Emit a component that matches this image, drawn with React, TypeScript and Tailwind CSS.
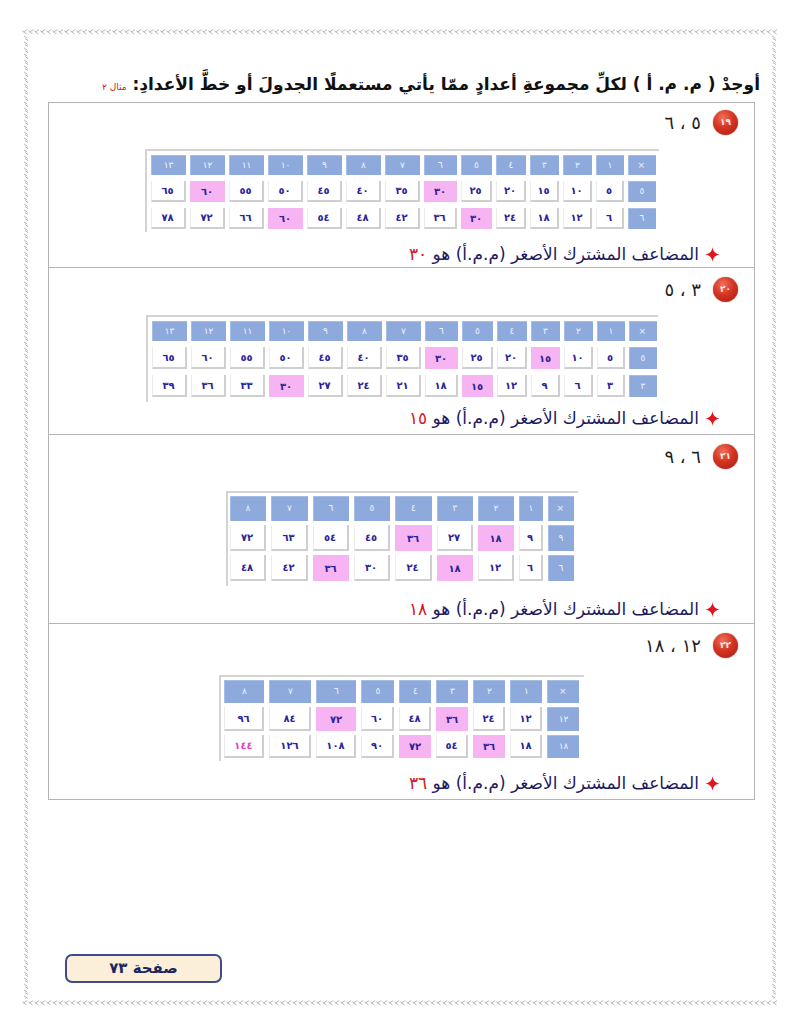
import React from "react";

const AR_DIGITS = "٠١٢٣٤٥٦٧٨٩";
const ar = (n: number) =>
  String(n)
    .split("")
    .map((d) => AR_DIGITS[Number(d)])
    .join("");

const FONT = "font-['DejaVu_Sans',sans-serif]";

type Problem = {
  no: number;
  label: string;
  rows: [number, number];
  cols: number;
  hi: [number[], number[]];
  lcm: number;
  widths: number[]; // on-screen order, left to right, × last
  heights: [number, number, number];
  frame: string;
  rowGap: string;
  colGap: string;
  section: string;
  tableGap: string;
  footGap: string;
  special?: number;
};

const WIDE = [35, 35, 35, 35, 35, 35, 35, 33, 31, 30, 29, 29, 28, 28];

// labels are logical (rtl) order: first number sits on the right
const PROBLEMS: Problem[] = [
  {
    no: 19,
    label: "٥ ، ٦",
    rows: [5, 6],
    cols: 13,
    hi: [[6, 12], [5, 10]],
    lcm: 30,
    widths: WIDE,
    heights: [20, 21, 21],
    frame: "pt-[4px] pb-[3px] pl-[4px] pr-[3px]",
    rowGap: "gap-[6px]",
    colGap: "gap-[4px]",
    section: "pt-[7px] pb-[3px]",
    tableGap: "mt-[14px]",
    footGap: "mt-[12px]",
  },
  {
    no: 20,
    label: "٣ ، ٥",
    rows: [5, 3],
    cols: 13,
    hi: [[3, 6], [5, 10]],
    lcm: 15,
    widths: WIDE,
    heights: [20, 22, 22],
    frame: "pt-[4px] pb-[5px] pl-[4px] pr-[1px]",
    rowGap: "gap-[6px]",
    colGap: "gap-[4px]",
    section: "pt-[9px] pb-[6px]",
    tableGap: "mt-[13px]",
    footGap: "mt-[6px]",
  },
  {
    no: 21,
    label: "٦ ، ٩",
    rows: [9, 6],
    cols: 8,
    hi: [[2, 4], [3, 6]],
    lcm: 18,
    widths: [36, 37, 36, 36, 37, 36, 36, 24, 26],
    heights: [25, 26, 26],
    frame: "pt-[3px] pb-[5px] pl-[2px] pr-[4px]",
    rowGap: "gap-[4px]",
    colGap: "gap-[5px]",
    section: "pt-[9px] pb-[4px]",
    tableGap: "mt-[22px]",
    footGap: "mt-[13px]",
  },
  {
    no: 22,
    label: "١٢ ، ١٨",
    rows: [12, 18],
    cols: 8,
    hi: [[3, 6], [2, 4]],
    lcm: 36,
    widths: [40, 42, 40, 33, 32, 32, 32, 32, 32],
    heights: [23, 24, 23],
    frame: "pt-[3px] pb-[3px] pl-[3px] pr-[5px]",
    rowGap: "gap-[4px]",
    colGap: "gap-[5px]",
    section: "pt-[9px] pb-[6px]",
    tableGap: "mt-[17px]",
    footGap: "mt-[12px]",
    special: 144,
  },
];

type Kind = "head" | "plain" | "pink";

function Cell({ w, h, kind, text, magenta }: { w: number; h: number; kind: Kind; text: string; magenta?: boolean }) {
  const look =
    kind === "head"
      ? "bg-[#8eaadc] text-[#eef2fb] text-[9px] border-t border-l border-[#a8bde6]"
      : kind === "pink"
        ? "bg-[#f6b4f3] font-bold text-[10px]"
        : "bg-white font-bold text-[10px] border-r-2 border-b-2 border-l border-[#cfcfcf] border-l-[#ebebeb]";
  const ink = kind === "head" ? "" : magenta ? "text-[#e23fc4]" : "text-[#2a239a]";
  return (
    <div
      className={`flex shrink-0 items-center justify-center tracking-[1.5px] ${FONT} ${look} ${ink}`}
      style={{ width: w, height: h }}
    >
      {text}
    </div>
  );
}

function Grid({ p }: { p: Problem }) {
  const ks = Array.from({ length: p.cols }, (_, i) => p.cols - i);
  return (
    <div className={`flex flex-col border-t-2 border-l-2 border-[#d3d3d3] bg-white ${p.frame} ${p.rowGap}`}>
      <div className={`flex ${p.colGap}`}>
        {ks.map((k, i) => (
          <Cell key={k} w={p.widths[i]} h={p.heights[0]} kind="head" text={ar(k)} />
        ))}
        <Cell w={p.widths[p.cols]} h={p.heights[0]} kind="head" text="×" />
      </div>
      {p.rows.map((r, ri) => (
        <div key={r} className={`flex ${p.colGap}`}>
          {ks.map((k, i) => {
            const v = r * k;
            return (
              <Cell
                key={k}
                w={p.widths[i]}
                h={p.heights[ri + 1]}
                kind={p.hi[ri].includes(k) ? "pink" : "plain"}
                text={ar(v)}
                magenta={v === p.special}
              />
            );
          })}
          <Cell w={p.widths[p.cols]} h={p.heights[ri + 1]} kind="head" text={ar(r)} />
        </div>
      ))}
    </div>
  );
}

function Badge({ n }: { n: number }) {
  return (
    <div className="flex h-[25px] w-[25px] items-center justify-center rounded-full bg-[radial-gradient(circle_at_40%_30%,#f0705a_0%,#d43422_45%,#a91b10_100%)] shadow-[0_0_1px_#7a1208]">
      <span className={`text-[9px] font-bold text-[#ffe9e4] ${FONT}`}>{ar(n)}</span>
    </div>
  );
}

function Section({ p }: { p: Problem }) {
  return (
    <div className={`flex flex-col border-b border-[#b4b4b4] ${p.section}`}>
      <div dir="rtl" className="flex items-center gap-[12px] pr-[16px]">
        <Badge n={p.no} />
        <span className={`text-[18px] leading-[25px] text-[#1e1e1e] ${FONT}`}>{p.label}</span>
      </div>
      <div className={`flex justify-center ${p.tableGap}`}>
        <Grid p={p} />
      </div>
      <div
        dir="rtl"
        className={`flex items-center gap-[6px] pr-[34px] text-[17px] leading-[20px] text-[#1c1a5e] ${FONT} ${p.footGap}`}
      >
        <svg width="15" height="15" viewBox="0 0 16 16">
          <path d="M8 0 C8.6 5 11 7.4 16 8 C11 8.6 8.6 11 8 16 C7.4 11 5 8.6 0 8 C5 7.4 7.4 5 8 0Z" fill="#e3141b" />
        </svg>
        <span>
          المضاعف المشترك الأصغر (م.م.أ) هو <span className="text-[#d4141b]">{ar(p.lcm)}</span>
        </span>
      </div>
    </div>
  );
}

function Strip({ id, vertical }: { id: string; vertical?: boolean }) {
  return (
    <svg className={vertical ? "h-full w-[8px]" : "h-[7px] w-full"} preserveAspectRatio="none">
      <defs>
        {vertical ? (
          <pattern id={id} width="8" height="6" patternUnits="userSpaceOnUse">
            <path d="M2 1 L5.5 3.2 M3 3.6 L6 5.4" stroke="#a3a3a3" strokeWidth="0.8" fill="none" />
          </pattern>
        ) : (
          <pattern id={id} width="6" height="7" patternUnits="userSpaceOnUse">
            <path d="M5.2 1.5 L1.6 4 L4.6 6 M1.6 4 L0.6 2.6" stroke="#a3a3a3" strokeWidth="0.8" fill="none" />
          </pattern>
        )}
      </defs>
      <rect width="100%" height="100%" fill={`url(#${id})`} />
    </svg>
  );
}

export default function App() {
  return (
    <div className="h-[1035px] w-[800px] bg-white px-[22px] pt-[28px]">
      <div className="flex h-[978px] flex-col">
        <Strip id="edge-top" />
        <div className="flex flex-1">
          <Strip id="edge-left" vertical />
          <div className="flex flex-1 flex-col">
            <div
              dir="rtl"
              className={`mt-[37px] pr-[10px] text-[17px] font-bold leading-[25px] text-[#111] ${FONT}`}
            >
              أوجدْ ( م. م. أ ) لكلِّ مجموعةِ أعدادٍ ممّا يأتي مستعملًا الجدولَ أو خطَّ الأعدادِ:{" "}
              <span className="text-[9px] font-normal text-[#d4141b]">مثال ٢</span>
            </div>
            <div className="ml-[18px] mr-[15px] mt-[2px] flex flex-col border-x border-t border-[#b4b4b4]">
              {PROBLEMS.map((p) => (
                <Section key={p.no} p={p} />
              ))}
            </div>
            <div className="flex-1" />
            <div
              className={`mb-[16px] ml-[35px] flex h-[29px] w-[157px] items-center justify-center rounded-[7px] border-2 border-[#3d4b8c] bg-[#fcefd9] text-[15px] font-bold text-[#1d2461] ${FONT}`}
            >
              صفحة ٧٣
            </div>
          </div>
          <Strip id="edge-right" vertical />
        </div>
        <Strip id="edge-bottom" />
      </div>
    </div>
  );
}
